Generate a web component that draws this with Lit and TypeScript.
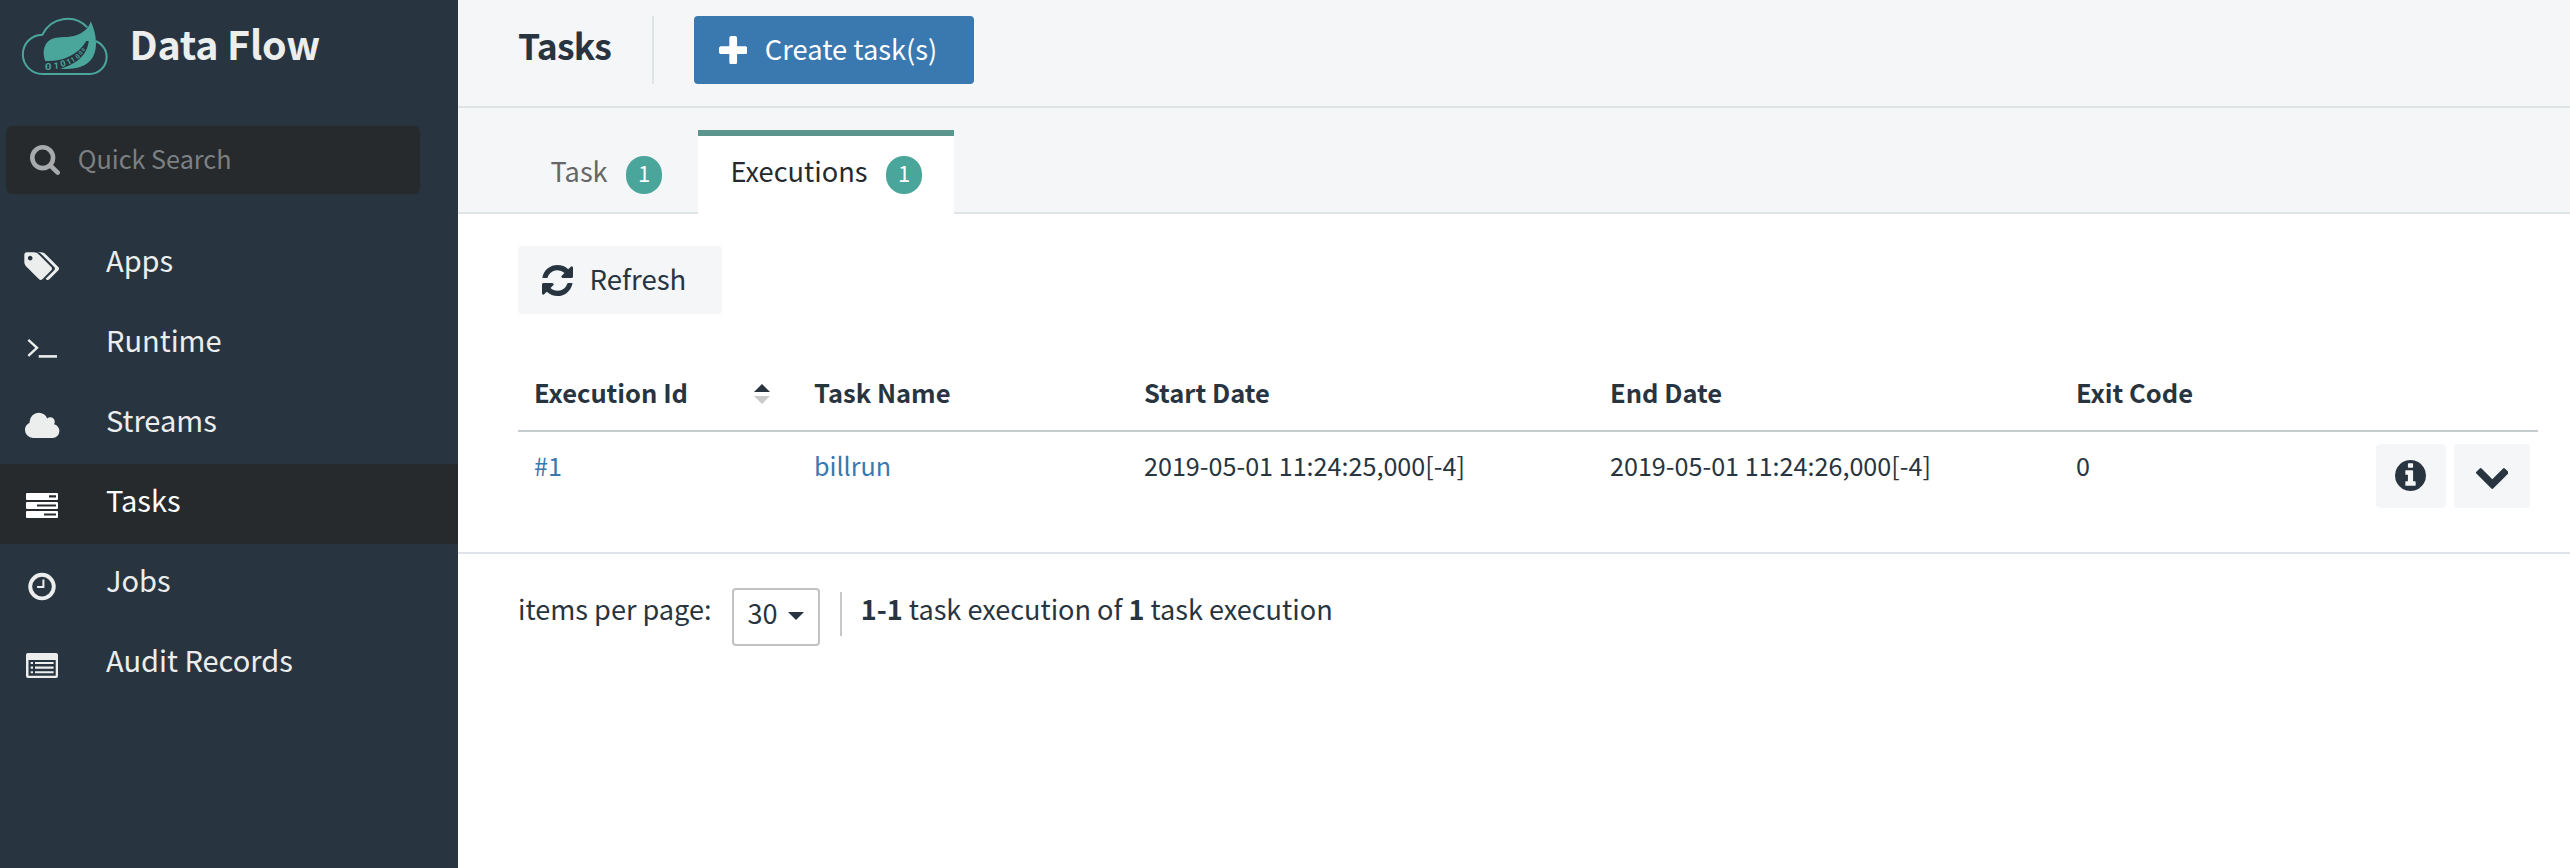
import { LitElement, html, svg, css } from "lit";
import { customElement } from "lit/decorators.js";
import { classMap } from "lit/directives/class-map.js";

const glyphs = {
  plus: {
    box: "192 128 1408 1408",
    d: "M1600 736v192q0 40-28 68t-68 28h-416v416q0 40-28 68t-68 28h-192q-40 0-68-28t-28-68v-416h-416q-40 0-68-28t-28-68v-192q0-40 28-68t68-28h416v-416q0-40 28-68t68-28h192q40 0 68 28t28 68v416h416q40 0 68 28t28 68z",
  },
  magnifier: {
    box: "64 128 1664 1664",
    d: "M1216 832q0-185-131.5-316.5t-316.5-131.5-316.5 131.5-131.5 316.5 131.5 316.5 316.5 131.5 316.5-131.5 131.5-316.5zm512 832q0 52-38 90t-90 38q-54 0-90-38l-343-342q-179 124-399 124-143 0-273.5-55.5t-225-150-150-225-55.5-273.5 55.5-273.5 150-225 225-150 273.5-55.5 273.5 55.5 225 150 150 225 55.5 273.5q0 220-124 399l343 343q37 37 37 90z",
  },
  refresh: {
    box: "128 128 1536 1536",
    d: "M1639 1056q0 5-1 7-64 268-268 434.5t-478 166.5q-146 0-282.5-55t-243.5-157l-129 129q-19 19-45 19t-45-19-19-45v-448q0-26 19-45t45-19h448q26 0 45 19t19 45-19 45l-137 137q71 66 161 102t187 36q134 0 250-65t186-179q11-17 53-117 8-23 30-23h192q13 0 22.5 9.5t9.5 22.5zm25-800v448q0 26-19 45t-45 19h-448q-26 0-45-19t-19-45 19-45l138-138q-148-137-349-137-134 0-250 65t-186 179q-11 17-53 117-8 23-30 23h-199q-13 0-22.5-9.5t-9.5-22.5v-7q65-268 270-434.5t480-166.5q146 0 284 55.5t245 156.5l130-129q19-19 45-19t45 19 19 45z",
  },
  info: {
    box: "128 128 1536 1536",
    d: "M1152 1376v-160q0-14-9-23t-23-9h-96v-512q0-14-9-23t-23-9h-320q-14 0-23 9t-9 23v160q0 14 9 23t23 9h96v320h-96q-14 0-23 9t-9 23v160q0 14 9 23t23 9h448q14 0 23-9t9-23zm-128-896v-160q0-14-9-23t-23-9h-192q-14 0-23 9t-9 23v160q0 14 9 23t23 9h192q14 0 23-9t9-23zm640 416q0 209-103 385.5t-279.5 279.5-385.5 103-385.5-103-279.5-279.5-103-385.5 103-385.5 279.5-279.5 385.5-103 385.5 103 279.5 279.5 103 385.5z",
  },
  chevron: {
    box: "90 533 1612 1036",
    d: "M1683 808l-742 741q-19 19-45 19t-45-19l-742-741q-19-19-19-45.5t19-45.5l166-165q19-19 45-19t45 19l531 531 531-531q19-19 45-19t45 19l166 165q19 19 19 45.5t-19 45.5z",
  },
};

const glyph = (name: keyof typeof glyphs) =>
  html`<svg class="glyph ${name}" viewBox=${glyphs[name].box}><path d=${glyphs[name].d}></path></svg>`;

const navIcons = {
  apps: svg`<path transform="translate(3.5 3.9) scale(.01827)" d="M384 448q0-53-37.5-90.5t-90.5-37.5-90.5 37.5-37.5 90.5 37.5 90.5 90.5 37.5 90.5-37.5 37.5-90.5zm1067 576q0 53-37 90l-491 492q-39 37-91 37-53 0-90-37l-715-716q-38-37-64.5-101t-26.5-117v-416q0-52 38-90t90-38h416q53 0 117 26.5t102 64.5l715 714q37 39 37 91zm384 0q0 53-37 90l-491 492q-39 37-91 37-36 0-59-14t-53-45l470-470q37-37 37-90 0-52-37-91l-715-714q-38-38-102-64.5t-117-26.5h224q53 0 117 26.5t102 64.5l715 714q37 39 37 91z"/>`,
  runtime: svg`<path d="M6.3 13.8l8.7 8-8.7 8" fill="none" stroke="currentColor" stroke-width="2.4"/><rect x="16.7" y="29.1" width="18.3" height="2.6"/>`,
  streams: svg`<path transform="translate(1.85 4.4) scale(.0179)" d="M1984 1152q0 159-112.5 271.5t-271.5 112.5h-1088q-185 0-316.5-131.5t-131.5-316.5q0-132 71-241.5t187-163.5q-2-28-2-43 0-212 150-362t362-150q158 0 286.5 88t187.5 230q70-62 166-62 106 0 181 75t75 181q0 75-41 138 129 30 213 134.5t84 239.5z"/>`,
  tasks: svg`<path fill-rule="evenodd" d="M5 7h30a1 1 0 0 1 1 1v5a1 1 0 0 1-1 1h-30a1 1 0 0 1-1-1v-5a1 1 0 0 1 1-1zM27 9.3v2.2h7v-2.2zM5 16h30a1 1 0 0 1 1 1v5a1 1 0 0 1-1 1h-30a1 1 0 0 1-1-1v-5a1 1 0 0 1 1-1zM15 18.4v2.2h19v-2.2zM5 25h30a1 1 0 0 1 1 1v5a1 1 0 0 1-1 1h-30a1 1 0 0 1-1-1v-5a1 1 0 0 1 1-1zM22 27.4v2.2h12v-2.2z"/>`,
  jobs: svg`<circle cx="20" cy="20.6" r="11.8" fill="none" stroke="currentColor" stroke-width="3.9"/><path d="M20.4 13.5h2v8.5h-7.3v-2h5.3z"/>`,
  audit: svg`<path fill-rule="evenodd" d="M6 7h28a2 2 0 0 1 2 2v21a2 2 0 0 1-2 2h-28a2 2 0 0 1-2-2v-21a2 2 0 0 1 2-2zM6.5 14v15.8h27.2v-15.8z"/><path d="M8.7 16h2.3v2.1h-2.3zM8.7 20.6h2.3v2.1h-2.3zM8.7 25.2h2.3v2.1h-2.3zM13 16h18.6v2.1h-18.6zM13 20.6h18.6v2.1h-18.6zM13 25.2h18.6v2.1h-18.6z"/>`,
};

const nav = [
  { label: "Apps", icon: navIcons.apps, active: false },
  { label: "Runtime", icon: navIcons.runtime, active: false },
  { label: "Streams", icon: navIcons.streams, active: false },
  { label: "Tasks", icon: navIcons.tasks, active: true },
  { label: "Jobs", icon: navIcons.jobs, active: false },
  { label: "Audit Records", icon: navIcons.audit, active: false },
];

@customElement("app-sidebar")
class AppSidebar extends LitElement {
  static styles = css`
    :host {
      display: block;
      background: #283540;
      color: #eceeee;
    }
    .brand {
      display: flex;
      height: 126px;
      box-sizing: border-box;
      padding: 18px 0 0 22px;
    }
    .logo {
      width: 86px;
      height: 58px;
      margin-right: 21.5px;
      overflow: visible;
      fill: #4aa59b;
    }
    .logo .outline {
      fill: none;
      stroke: #4aa59b;
      stroke-width: 6;
    }
    .bits {
      font: 700 26px "Roboto", sans-serif;
    }
    .name {
      margin-top: 5px;
      font-size: 39.4px;
      line-height: 40px;
      font-weight: 700;
      letter-spacing: -0.2px;
      white-space: nowrap;
    }
    .search {
      display: flex;
      align-items: center;
      height: 68px;
      width: 414px;
      box-sizing: border-box;
      margin: 0 0 30px 6px;
      padding-left: 24px;
      border-radius: 6px;
      background: #262a2d;
      color: #a9aaab;
    }
    .glyph {
      flex: none;
      width: 30px;
      height: 30px;
      fill: currentColor;
    }
    .hint {
      margin: 0 0 5px 17.8px;
      color: #7d8082;
      font-size: 25.2px;
      line-height: 62px;
    }
    .item {
      display: flex;
      height: 80px;
      font-size: 29px;
      line-height: 71px;
    }
    .item.active {
      background: #262a2d;
      color: #fff;
    }
    .icon {
      width: 40px;
      height: 40px;
      margin: 22px 44px 0 22px;
      fill: currentColor;
    }
  `;

  render() {
    return html`
      <div class="brand">
        <svg class="logo" viewBox="66 54 258 174">
          <path class="outline" d="M262 82A83 83 0 0 0 127 104A59 59 0 0 0 128 222H270A51 51 0 0 0 286 123" />
          <path d="M272 64C267 82 257 92 240 101C215 114 190 109 165 114C142 119 131 137 131 158C131 168 133 176 136 183C185 185 232 168 259 123L266 123C264 155 238 192 180 206C245 212 288 190 288 130C288 108 282 84 272 64Z" />
          <g class="bits">
            <text transform="translate(135 209) scale(1.3 1.1)">0</text>
            <text transform="translate(161 207) rotate(-4) scale(1.1 1.05)">1</text>
            <text transform="translate(183 201) rotate(-12) scale(1.05 1)">0</text>
            <text transform="translate(203 195) rotate(-22) scale(.9)">1</text>
            <text transform="translate(217 188) rotate(-30) scale(.8)">1</text>
            <text transform="translate(233 178) rotate(-42) scale(.75)">0</text>
            <text transform="translate(243 166) rotate(-50) scale(.62)">0</text>
            <text transform="translate(251 155) rotate(-56) scale(.55)">0</text>
          </g>
        </svg>
        <div class="name">Data Flow</div>
      </div>
      <div class="search">${glyph("magnifier")}<span class="hint">Quick Search</span></div>
      <nav>
        ${nav.map(
          (n) => html`<div class=${classMap({ item: true, active: n.active })}>
            <svg class="icon" viewBox="0 0 40 40">${n.icon}</svg><span>${n.label}</span>
          </div>`
        )}
      </nav>
    `;
  }
}

@customElement("app-root")
class AppRoot extends LitElement {
  static styles = css`
    :host {
      display: grid;
      grid-template-columns: 458px 1fr;
      height: 868px;
      overflow: hidden;
      background: #fff;
      color: #283540;
      font-family: "Noto Sans CJK SC", "Noto Sans", sans-serif;
      font-size: 27.2px;
    }
    .glyph {
      display: block;
      flex: none;
      fill: currentColor;
    }
    .header {
      display: flex;
      height: 106px;
      padding: 16px 0 0 60px;
      box-sizing: border-box;
      background: #f4f6f8;
    }
    .title {
      width: 136px;
      height: 68px;
      box-sizing: border-box;
      margin-right: 40px;
      border-right: 2px solid #dfe5e6;
      font-size: 35.5px;
      line-height: 57px;
      font-weight: 700;
      letter-spacing: -0.8px;
    }
    .button {
      display: flex;
      align-items: center;
      height: 68px;
      box-sizing: border-box;
      border-radius: 4px;
      background: #f4f6f8;
      white-space: nowrap;
    }
    .button span {
      align-self: flex-start;
      line-height: 64px;
    }
    .create {
      width: 280px;
      padding-left: 25px;
      gap: 17.4px;
      background: #3a78b0;
      color: #fff;
      font-size: 27.3px;
    }
    .plus {
      width: 28.4px;
      height: 28.4px;
    }
    .tabs {
      display: flex;
      height: 108px;
      box-sizing: border-box;
      padding: 22px 0 0 60px;
      border-top: 2px solid #dfe5e6;
      background: #f4f6f8;
      box-shadow: inset 0 -2px #dfe5e6;
    }
    .tab {
      display: flex;
      justify-content: space-between;
      width: 180px;
      height: 84px;
      box-sizing: border-box;
      padding: 0 36px 0 32.5px;
      border-top: 6px solid transparent;
      color: #666;
      line-height: 69px;
    }
    .tab.active {
      width: 256px;
      padding-right: 32px;
      border-color: #5a968e;
      background: #fff;
      color: #262a2e;
    }
    .badge {
      width: 36px;
      height: 38px;
      margin-top: 20px;
      border-radius: 18px;
      background: #4aa59b;
      color: #fff;
      font-size: 22px;
      line-height: 33px;
      text-align: center;
    }
    .content {
      padding: 32px 32px 0 60px;
    }
    .reload {
      width: 204px;
      padding-left: 24px;
      gap: 16.5px;
      font-size: 27.6px;
    }
    .refresh {
      width: 31px;
      height: 31px;
    }
    .row {
      display: grid;
      grid-template-columns: 280px 330px 466px 466px 1fr auto;
      font-size: 25.15px;
      line-height: 66px;
      height: 120px;
    }
    .row > * {
      padding-left: 16px;
    }
    .head {
      height: 118px;
      box-sizing: border-box;
      padding-top: 38px;
      border-bottom: 2px solid #c5cdcf;
      font-size: 25.5px;
      font-weight: 700;
      line-height: 79px;
    }
    .sortable {
      display: flex;
      justify-content: space-between;
      padding-right: 28px;
    }
    .sort {
      width: 16px;
      height: 20px;
      margin-top: 32px;
    }
    .link {
      color: #3a78b0;
    }
    .actions {
      display: flex;
      gap: 8px;
      padding: 12px 8px 0 0;
    }
    .actions .button {
      height: 64px;
      justify-content: center;
    }
    .details {
      width: 70px;
      padding: 0 1px 2px 0;
    }
    .more {
      width: 76px;
      padding-top: 5px;
    }
    .info {
      width: 31px;
      height: 31px;
    }
    .chevron {
      width: 32.6px;
      height: 21px;
    }
    .pager {
      display: flex;
      padding-left: 60px;
      border-top: 2px solid #e0e4e8;
      font-size: 27.1px;
      line-height: 110px;
      white-space: pre;
    }
    .label {
      width: 214px;
    }
    .select {
      display: flex;
      justify-content: space-between;
      width: 88px;
      height: 58px;
      box-sizing: border-box;
      margin-top: 34px;
      padding: 0 14px 0 13.5px;
      border: 2px solid #c2c2c2;
      border-radius: 4px;
      line-height: 46px;
    }
    .caret {
      width: 16px;
      height: 8px;
      margin-top: 22px;
    }
    .rule {
      width: 2px;
      height: 44px;
      margin: 38px 18.8px 0 20px;
      background: #c8c8c8;
    }
  `;

  render() {
    return html`
      <app-sidebar></app-sidebar>
      <main>
        <div class="header">
          <div class="title">Tasks</div>
          <div class="button create">${glyph("plus")}<span>Create task(s)</span></div>
        </div>
        <div class="tabs">
          <div class="tab"><span>Task</span><span class="badge">1</span></div>
          <div class="tab active"><span>Executions</span><span class="badge">1</span></div>
        </div>
        <div class="content">
          <div class="button reload">${glyph("refresh")}<span>Refresh</span></div>
          <div class="row head">
            <div class="sortable">
              <span>Execution Id</span>
              <svg class="sort" viewBox="0 0 16 20">
                <path fill="#283540" d="M8 0l8 8H0z" />
                <path fill="#cacaca" d="M8 20l8-8H0z" />
              </svg>
            </div>
            <div>Task Name</div>
            <div>Start Date</div>
            <div>End Date</div>
            <div>Exit Code</div>
          </div>
          <div class="row">
            <div class="link">#1</div>
            <div class="link">billrun</div>
            <div>2019-05-01 11:24:25,000[-4]</div>
            <div>2019-05-01 11:24:26,000[-4]</div>
            <div>0</div>
            <div class="actions">
              <div class="button details">${glyph("info")}</div>
              <div class="button more">${glyph("chevron")}</div>
            </div>
          </div>
        </div>
        <div class="pager">
          <span class="label">items per page:</span>
          <div class="select">
            <span>30</span><svg class="caret" viewBox="0 0 16 8"><path fill="#283540" d="M0 0h16l-8 8z" /></svg>
          </div>
          <div class="rule"></div>
          <span><b>1-1</b> task execution of <b>1</b> task execution</span>
        </div>
      </main>
    `;
  }
}
